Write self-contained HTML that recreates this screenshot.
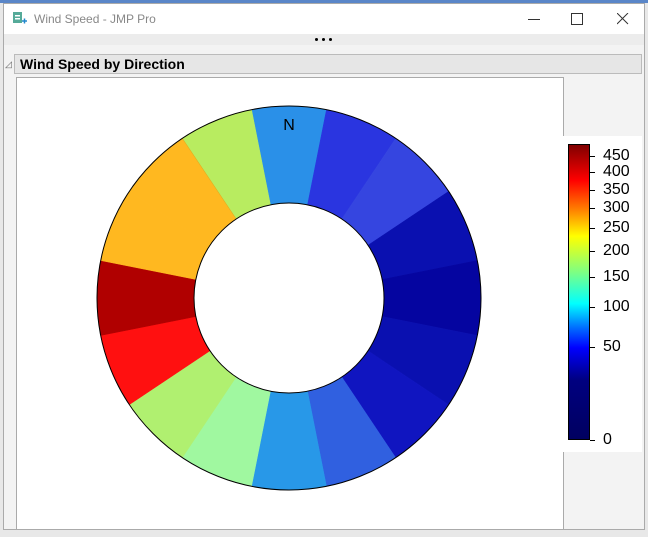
<!DOCTYPE html>
<html><head><meta charset="utf-8"><style>
body{margin:0;width:648px;height:537px;overflow:hidden;background:#e8e8e8;font-family:"Liberation Sans",sans-serif;position:relative}
.win{position:absolute;left:3px;top:3px;width:642px;height:527px;background:#f3f3f3;border:1px solid #aaa;box-sizing:border-box}
.title{position:absolute;left:0;top:0;width:100%;height:30px;background:#fff}
.title span{position:absolute;left:30px;top:8px;font-size:12px;color:#888}
.band{position:absolute;left:0;top:30px;width:100%;height:11px;background:#ececec}
.hdr{position:absolute;left:10px;top:50px;width:628px;height:20px;background:#e6e6e6;border:1px solid #bbb;box-sizing:border-box;font-weight:bold;font-size:14px;line-height:19px;padding-left:5px}
.plot{position:absolute;left:12px;top:73px;width:548px;height:453px;background:#fff;border:1px solid #aaa;box-sizing:border-box}
.dot{position:absolute;top:38px;width:3px;height:3px;background:#000;border-radius:50%}
</style></head><body>
<div style="position:absolute;left:0;top:0;width:648px;height:3px;background:#5a86c8"></div>
<div class="win">
<div class="title">
<svg style="position:absolute;left:8px;top:7px" width="16" height="16"><rect x="1" y="1" width="9" height="11" fill="#5a9"/><rect x="3" y="4" width="5" height="1.5" fill="#fff"/><rect x="3" y="7" width="5" height="1.5" fill="#fff"/><path d="M10 10h5M12.5 7.5v5" stroke="#28c" stroke-width="1.5"/></svg>
<span>Wind Speed - JMP Pro</span>
<div style="position:absolute;left:524px;top:15px;width:12px;height:1px;background:#333"></div>
<div style="position:absolute;left:567px;top:9px;width:10px;height:10px;border:1px solid #333"></div>
<svg style="position:absolute;left:613px;top:9px" width="12" height="12"><path d="M0 0L11 11M11 0L0 11" stroke="#333"/></svg>
</div>
<div class="band"></div>
<div style="position:absolute;left:1px;top:55px;font-size:9px;color:#666">◿</div>
<div class="hdr">Wind Speed by Direction</div>
<div class="plot"></div>
</div>
<div class="dot" style="left:315px"></div><div class="dot" style="left:322px"></div><div class="dot" style="left:329px"></div>
<svg id="s" style="position:absolute;left:0;top:0" width="648" height="537"></svg>
<div style="position:absolute;left:562px;top:136px;width:80px;height:316px;background:#fff"></div>
<div style="position:absolute;left:568px;top:144px;width:22px;height:296px;border:1px solid #000;box-sizing:border-box;background:linear-gradient(to bottom,#800000 0%,#ff0000 12%,#ff8000 22%,#ffff00 31%,#80ff80 43%,#00ffff 54%,#0070ff 62%,#0000ff 69%,#000080 80%,#000060 100%)"></div>
<div id="lg"></div>
<script>
var cols=["#2a90e8","#2a35e0","#3545e0","#0a10b0","#0505a0","#0a10b0","#1015c0","#3060e0","#2898e8","#a0f8a0","#b0f070","#ff1010","#b00000","#ffb820","#ffb820","#b8ec60"];
var cx=289,cy=298,R=192,r=95,h="";
function p(a,rad){var t=(a-90)*Math.PI/180;return (cx+rad*Math.cos(t)).toFixed(2)+" "+(cy+rad*Math.sin(t)).toFixed(2);}
for(var i=0;i<16;i++){var a0=i*22.5-11.25,a1=a0+22.5;
h+='<path d="M'+p(a0,r)+'L'+p(a0,R)+'A'+R+' '+R+' 0 0 1 '+p(a1,R)+'L'+p(a1,r)+'A'+r+' '+r+' 0 0 0 '+p(a0,r)+'Z" fill="'+cols[i]+'" stroke="'+cols[i]+'" stroke-width="0.5"/>';}
h+='<line x1="'+p(-33.75,r).split(" ")[0]+'" y1="'+p(-33.75,r).split(" ")[1]+'" x2="'+p(-33.75,R).split(" ")[0]+'" y2="'+p(-33.75,R).split(" ")[1]+'" stroke="#e8a818" stroke-width="0.6"/>';
h+='<circle cx="'+cx+'" cy="'+cy+'" r="'+R+'" fill="none" stroke="#000" stroke-width="1"/><circle cx="'+cx+'" cy="'+cy+'" r="'+r+'" fill="#fff" stroke="#000" stroke-width="1"/>';
h+='<text x="289" y="130" font-family="Liberation Sans" font-size="16" text-anchor="middle">N</text>';
document.getElementById("s").innerHTML=h;
var L=[[0,440],[50,347],[100,307],[150,277],[200,251],[250,228],[300,208],[350,190],[400,172],[450,156]],g="";
L.forEach(function(v){g+='<div style="position:absolute;left:590px;top:'+v[1]+'px;width:5px;height:1px;background:#000"></div><div style="position:absolute;left:603px;top:'+(v[1]-9)+'px;font-size:16px;line-height:18px">'+v[0]+'</div>';});
document.getElementById("lg").innerHTML=g;
</script>
</body></html>
